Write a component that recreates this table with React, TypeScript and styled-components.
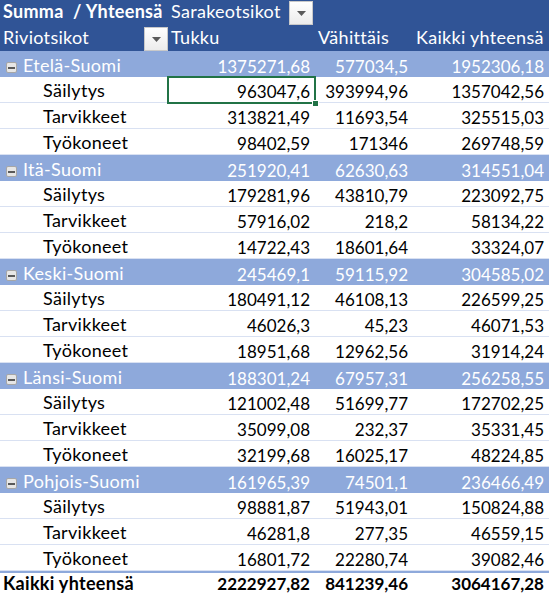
import React from "react";
import styled, { createGlobalStyle, css } from "styled-components";

const GlobalStyle = createGlobalStyle`
  html, body { margin: 0; padding: 0; background: #ffffff; }
  body { font-family: Lato, "Open Sans", sans-serif; }
`;

const COLS = "168px 147px 98px 136px";

type RowKind = "head" | "group" | "item" | "total";

const Table = styled.div`
  width: 549px;
  display: flex;
  flex-direction: column;
  font-family: Lato, "Open Sans", sans-serif;
  font-size: 17px;
  color: #000;
  overflow: hidden;
`;

const Row = styled.div<{ $kind: RowKind; $h?: number }>`
  display: grid;
  grid-template-columns: ${COLS};
  height: ${(p) => p.$h ?? 26}px;
  box-sizing: border-box;
  ${(p) =>
    p.$kind === "head" &&
    css`
      background: #305496;
      color: #ffffff;
    `}
  ${(p) =>
    p.$kind === "group" &&
    css`
      background: #8ea9db;
      color: #ffffff;
    `}
  ${(p) =>
    p.$kind === "item" &&
    css`
      background: #ffffff;
      border-bottom: 1px solid #d9e1f2;
    `}
  ${(p) =>
    p.$kind === "total" &&
    css`
      font-weight: 700;
      border-top: 2px solid #8ea9db;
    `}
`;

const Cell = styled.div<{ $right?: boolean; $indent?: number; $bold?: boolean; $pb?: number }>`
  position: relative;
  display: flex;
  align-items: flex-end;
  justify-content: ${(p) => (p.$right ? "flex-end" : "flex-start")};
  padding: 0 ${(p) => (p.$right ? 5 : 0)}px ${(p) => p.$pb ?? 0}px ${(p) => p.$indent ?? 3}px;
  line-height: 1.2;
  white-space: pre;
  font-weight: ${(p) => (p.$bold ? 700 : "inherit")};
  min-width: 0;
`;

const Label = styled.span<{ $pb?: number }>`
  font-size: 18px;
  letter-spacing: 0.3px;
  line-height: 1.2;
  padding-bottom: ${(p) => p.$pb ?? 0}px;
`;

const HeadCell = styled(Cell)`
  justify-content: space-between;
`;

const DropButton = styled.div<{ $mr?: number }>`
  align-self: flex-end;
  width: 24px;
  height: 24px;
  margin-right: ${(p) => p.$mr ?? 0}px;
  box-sizing: border-box;
  background: linear-gradient(#ffffff, #ececec);
  border: 1px solid #c9c9c9;
  display: flex;
  align-items: center;
  justify-content: center;
`;

const MinusBox = styled.span`
  align-self: flex-end;
  width: 11px;
  height: 11px;
  margin: 0 6px 4px 3px;
  box-sizing: border-box;
  border: 1px solid #a6a6a6;
  border-radius: 2px;
  background: #e6e6e6;
  display: inline-flex;
  align-items: center;
  justify-content: center;
  &::after {
    content: "";
    width: 7px;
    height: 2px;
    background: #595959;
  }
`;

const Selection = styled.div`
  position: absolute;
  left: -1px;
  top: -1px;
  right: -1px;
  bottom: -2px;
  border: 2px solid #217346;
  pointer-events: none;
  &::after {
    content: "";
    position: absolute;
    right: -5px;
    bottom: -5px;
    width: 5px;
    height: 5px;
    background: #217346;
    border: 1px solid #ffffff;
  }
`;

const Tri = () => (
  <svg width="9" height="5" viewBox="0 0 9 5">
    <path d="M0 0 H9 L4.5 5 Z" fill="#5a5a5a" />
  </svg>
);

type Item = { name: string; v: [string, string, string] };
type Group = { name: string; v: [string, string, string]; items: Item[] };

const data: Group[] = [
  {
    name: "Etelä-Suomi",
    v: ["1375271,68", "577034,5", "1952306,18"],
    items: [
      { name: "Säilytys", v: ["963047,6", "393994,96", "1357042,56"] },
      { name: "Tarvikkeet", v: ["313821,49", "11693,54", "325515,03"] },
      { name: "Työkoneet", v: ["98402,59", "171346", "269748,59"] },
    ],
  },
  {
    name: "Itä-Suomi",
    v: ["251920,41", "62630,63", "314551,04"],
    items: [
      { name: "Säilytys", v: ["179281,96", "43810,79", "223092,75"] },
      { name: "Tarvikkeet", v: ["57916,02", "218,2", "58134,22"] },
      { name: "Työkoneet", v: ["14722,43", "18601,64", "33324,07"] },
    ],
  },
  {
    name: "Keski-Suomi",
    v: ["245469,1", "59115,92", "304585,02"],
    items: [
      { name: "Säilytys", v: ["180491,12", "46108,13", "226599,25"] },
      { name: "Tarvikkeet", v: ["46026,3", "45,23", "46071,53"] },
      { name: "Työkoneet", v: ["18951,68", "12962,56", "31914,24"] },
    ],
  },
  {
    name: "Länsi-Suomi",
    v: ["188301,24", "67957,31", "256258,55"],
    items: [
      { name: "Säilytys", v: ["121002,48", "51699,77", "172702,25"] },
      { name: "Tarvikkeet", v: ["35099,08", "232,37", "35331,45"] },
      { name: "Työkoneet", v: ["32199,68", "16025,17", "48224,85"] },
    ],
  },
  {
    name: "Pohjois-Suomi",
    v: ["161965,39", "74501,1", "236466,49"],
    items: [
      { name: "Säilytys", v: ["98881,87", "51943,01", "150824,88"] },
      { name: "Tarvikkeet", v: ["46281,8", "277,35", "46559,15"] },
      { name: "Työkoneet", v: ["16801,72", "22280,74", "39082,46"] },
    ],
  },
];

export default function App() {
  return (
    <>
      <GlobalStyle />
      <Table>
        <Row $kind="head" $h={25}>
          <Cell $bold>
            <Label $pb={2}>{"Summa  / Yhteensä"}</Label>
          </Cell>
          <HeadCell>
            <Label $pb={2}>Sarakeotsikot</Label>
            <DropButton $mr={2}>
              <Tri />
            </DropButton>
          </HeadCell>
          <Cell />
          <Cell />
        </Row>
        <Row $kind="head" $h={26}>
          <HeadCell>
            <Label $pb={2}>Riviotsikot</Label>
            <DropButton>
              <Tri />
            </DropButton>
          </HeadCell>
          <Cell>
            <Label $pb={2}>Tukku</Label>
          </Cell>
          <Cell>
            <Label $pb={2}>Vähittäis</Label>
          </Cell>
          <Cell>
            <Label $pb={2}>Kaikki yhteensä</Label>
          </Cell>
        </Row>
        {data.map((g, gi) => (
          <React.Fragment key={g.name}>
            <Row $kind="group">
              <Cell>
                <MinusBox />
                <Label>{g.name}</Label>
              </Cell>
              {g.v.map((x, i) => (
                <Cell key={i} $right>
                  {x}
                </Cell>
              ))}
            </Row>
            {g.items.map((it, ii) => (
              <Row $kind="item" key={it.name}>
                <Cell $indent={43}>
                  <Label>{it.name}</Label>
                </Cell>
                {it.v.map((x, i) => (
                  <Cell key={i} $right>
                    {x}
                    {gi === 0 && ii === 0 && i === 0 && <Selection />}
                  </Cell>
                ))}
              </Row>
            ))}
          </React.Fragment>
        ))}
        <Row $kind="total" $h={26}>
          <Cell>
            <Label $pb={4}>Kaikki yhteensä</Label>
          </Cell>
          <Cell $right $pb={4}>2222927,82</Cell>
          <Cell $right $pb={4}>841239,46</Cell>
          <Cell $right $pb={4}>3064167,28</Cell>
        </Row>
      </Table>
    </>
  );
}
